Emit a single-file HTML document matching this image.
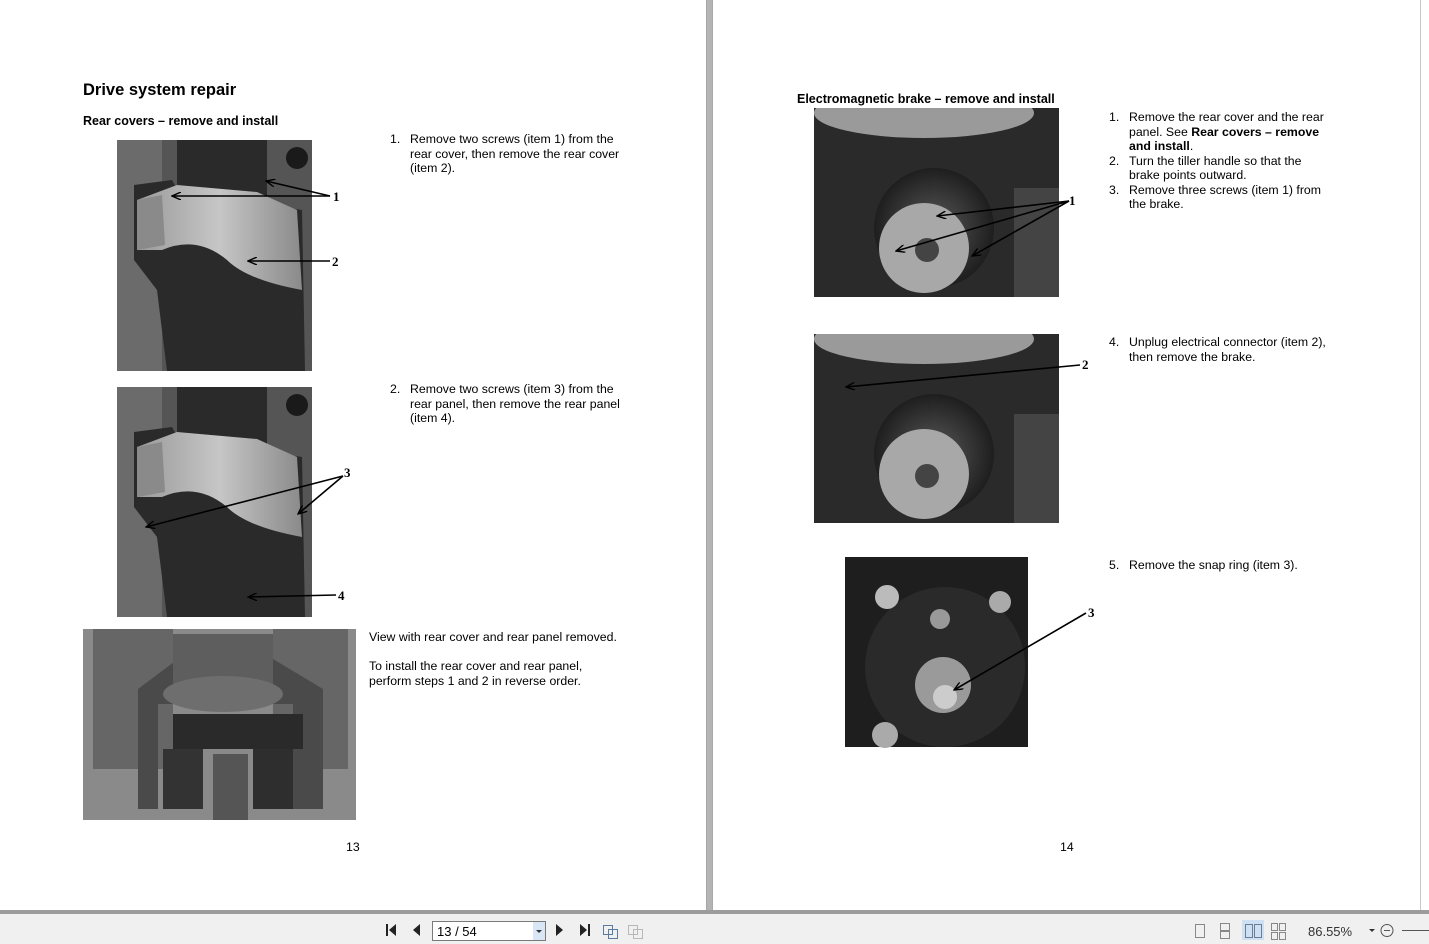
<!DOCTYPE html>
<html><head><meta charset="utf-8"><style>
*{margin:0;padding:0}
body{width:1429px;height:944px;background:#fff;position:relative;overflow:hidden;font-family:"Liberation Sans",Arial,sans-serif;color:#000}
.t{position:absolute;font-size:12.3px;line-height:14.5px;white-space:nowrap}
.n{position:absolute;font-size:12.3px}
h1{position:absolute;left:83px;top:81px;font-size:16.5px;font-weight:bold}
.h2{position:absolute;font-size:12.5px;font-weight:bold}
.ol{position:absolute;font-size:12.3px;line-height:14.5px}
.ol div{position:relative;padding-left:20px}
.ol span{position:absolute;left:0}
</style></head><body>
<div style="position:absolute;left:706px;top:0;width:7px;height:912px;background:#a8a8a8"></div>
<div style="position:absolute;left:707px;top:0;width:5px;height:912px;background:#b4b4b4"></div>
<div style="position:absolute;left:1420px;top:0;width:1px;height:912px;background:#c8c8c8"></div>
<div style="position:absolute;left:0;top:910px;width:1429px;height:4px;background:#9c9c9c"></div>
<div style="position:absolute;left:0;top:914px;width:1429px;height:30px;background:#f0f0f0"></div>

<svg style="position:absolute;left:0;top:0" width="1429" height="944">
<defs>
<linearGradient id="cv" x1="0" x2="1"><stop offset="0" stop-color="#9a9a9a"/><stop offset=".5" stop-color="#c6c6c6"/><stop offset="1" stop-color="#8a8a8a"/></linearGradient>
<radialGradient id="bk"><stop offset="0" stop-color="#5a5a5a"/><stop offset="1" stop-color="#1e1e1e"/></radialGradient>
<clipPath id="c1"><rect width="245" height="189"/></clipPath>
<marker id="a" markerWidth="10" markerHeight="8" refX="9" refY="4" orient="auto" markerUnits="userSpaceOnUse"><path d="M0,0 L9,4 L0,8" fill="none" stroke="#000" stroke-width="1.4"/></marker>
</defs>
<g transform="translate(117,140)">
<rect width="195" height="231" fill="#555"/>
<rect x="0" y="0" width="45" height="231" fill="#6b6b6b"/>
<rect x="60" y="0" width="90" height="70" fill="#2a2a2a"/>
<circle cx="180" cy="18" r="11" fill="#1a1a1a"/>
<path d="M17,45 L55,40 L65,58 L120,60 L185,70 L188,231 L50,231 L40,150 L17,120 Z" fill="#2a2a2a"/>
<path d="M20,60 L60,45 L140,52 L180,70 L185,150 Q130,140 110,120 Q80,95 45,110 L20,110 Z" fill="url(#cv)"/>
<path d="M20,60 L45,55 L48,105 L20,110 Z" fill="#8a8a8a"/>
</g>
<g transform="translate(117,387)">
<rect width="195" height="230" fill="#555"/>
<rect x="0" y="0" width="45" height="230" fill="#6b6b6b"/>
<rect x="60" y="0" width="90" height="70" fill="#2a2a2a"/>
<circle cx="180" cy="18" r="11" fill="#1a1a1a"/>
<path d="M17,45 L55,40 L65,58 L120,60 L185,70 L188,230 L50,230 L40,150 L17,120 Z" fill="#2a2a2a"/>
<path d="M20,60 L60,45 L140,52 L180,70 L185,150 Q130,140 110,120 Q80,95 45,110 L20,110 Z" fill="url(#cv)"/>
<path d="M20,60 L45,55 L48,105 L20,110 Z" fill="#8a8a8a"/>
</g>
<g transform="translate(83,629)">
<rect width="273" height="191" fill="#8a8a8a"/>
<rect x="10" y="0" width="80" height="140" fill="#666"/>
<rect x="190" y="0" width="75" height="140" fill="#666"/>
<path d="M55,60 L95,30 L190,30 L240,60 L240,180 L210,180 L210,75 L75,75 L75,180 L55,180Z" fill="#4a4a4a"/>
<rect x="90" y="5" width="100" height="60" fill="#5e5e5e"/>
<ellipse cx="140" cy="65" rx="60" ry="18" fill="#6e6e6e"/>
<rect x="90" y="85" width="130" height="35" fill="#2a2a2a"/>
<rect x="130" y="125" width="35" height="66" fill="#555"/>
<rect x="80" y="120" width="40" height="60" fill="#333"/>
<rect x="170" y="120" width="40" height="60" fill="#2e2e2e"/>
</g>
<g transform="translate(814,108)" clip-path="url(#c1)">
<rect width="245" height="189" fill="#2a2a2a"/>
<ellipse cx="110" cy="5" rx="110" ry="25" fill="#9a9a9a"/>
<circle cx="120" cy="120" r="60" fill="url(#bk)"/>
<circle cx="110" cy="140" r="45" fill="#a8a8a8"/>
<circle cx="113" cy="142" r="12" fill="#444"/>
<rect x="200" y="80" width="45" height="109" fill="#444"/>
</g>
<g transform="translate(814,334)" clip-path="url(#c1)">
<rect width="245" height="189" fill="#2a2a2a"/>
<ellipse cx="110" cy="5" rx="110" ry="25" fill="#9a9a9a"/>
<circle cx="120" cy="120" r="60" fill="url(#bk)"/>
<circle cx="110" cy="140" r="45" fill="#a8a8a8"/>
<circle cx="113" cy="142" r="12" fill="#444"/>
<rect x="200" y="80" width="45" height="109" fill="#444"/>
</g>
<g transform="translate(845,557)">
<rect width="183" height="190" fill="#1e1e1e"/>
<circle cx="100" cy="110" r="80" fill="#2a2a2a"/>
<circle cx="98" cy="128" r="28" fill="#9a9a9a"/>
<circle cx="100" cy="140" r="12" fill="#ccc"/>
<circle cx="42" cy="40" r="12" fill="#bbb"/>
<circle cx="155" cy="45" r="11" fill="#aaa"/>
<circle cx="95" cy="62" r="10" fill="#999"/>
<circle cx="40" cy="178" r="13" fill="#aaa"/>
</g>
<g stroke="#000" stroke-width="1.6" fill="none">
<path d="M330,196 L172,196" marker-end="url(#a)"/>
<path d="M330,196 L266,181" marker-end="url(#a)"/>
<path d="M330,261 L248,261" marker-end="url(#a)"/>
<path d="M343,476 L146,527" marker-end="url(#a)"/>
<path d="M343,476 L298,514" marker-end="url(#a)"/>
<path d="M336,595 L248,597" marker-end="url(#a)"/>
<path d="M1069,201 L937,216" marker-end="url(#a)"/>
<path d="M1069,201 L896,251" marker-end="url(#a)"/>
<path d="M1069,201 L972,256" marker-end="url(#a)"/>
<path d="M1080,365 L846,387" marker-end="url(#a)"/>
<path d="M1086,613 L954,690" marker-end="url(#a)"/>
</g>
<g font-family="Liberation Serif,serif" font-weight="bold" font-size="13">
<text x="333" y="201">1</text><text x="332" y="266">2</text><text x="344" y="477">3</text><text x="338" y="600">4</text>
<text x="1069" y="205">1</text><text x="1082" y="369">2</text><text x="1088" y="617">3</text>
</g>
</svg>

<h1>Drive system repair</h1>
<div class="h2" style="left:83px;top:114px">Rear covers – remove and install</div>
<div class="h2" style="left:797px;top:92px">Electromagnetic brake – remove and install</div>

<div class="ol" style="left:390px;top:132px;width:240px">
<div><span>1.</span>Remove two screws (item 1) from the rear cover, then remove the rear cover (item 2).</div></div>
<div class="ol" style="left:390px;top:382px;width:240px">
<div><span>2.</span>Remove two screws (item 3) from the rear panel, then remove the rear panel (item 4).</div></div>
<div class="t" style="left:369px;top:630px">View with rear cover and rear panel removed.<br><br>To install the rear cover and rear panel,<br>perform steps 1 and 2 in reverse order.</div>
<div class="ol" style="left:1109px;top:110px;width:220px">
<div><span>1.</span>Remove the rear cover and the rear panel. See <b>Rear covers – remove and install</b>.</div>
<div><span>2.</span>Turn the tiller handle so that the brake points outward.</div>
<div><span>3.</span>Remove three screws (item 1) from the brake.</div></div>
<div class="ol" style="left:1109px;top:335px;width:225px">
<div><span>4.</span>Unplug electrical connector (item 2), then remove the brake.</div></div>
<div class="ol" style="left:1109px;top:558px;width:225px">
<div><span>5.</span>Remove the snap ring (item 3).</div></div>
<div class="n" style="left:346px;top:840px">13</div>
<div class="n" style="left:1060px;top:840px">14</div>

<svg style="position:absolute;left:0;top:914px" width="1429" height="30">
<g fill="#222">
<rect x="386" y="10" width="2" height="12"/><path d="M396,10 L389,16 L396,22Z"/>
<path d="M420,10 L413,16 L420,22Z"/>
<path d="M556,10 L563,16 L556,22Z"/>
<path d="M580,10 L587,16 L580,22Z"/><rect x="588" y="10" width="2" height="12"/>
</g>
<rect x="432.5" y="7.5" width="113" height="19" fill="#fff" stroke="#7a7a7a"/>
<rect x="533" y="8" width="12" height="18" fill="#d8e6f5"/>
<path d="M536,16 L542,16 L539,19Z" fill="#333"/>
<text x="437" y="22" font-size="13" font-family="Liberation Sans,sans-serif" fill="#000">13 / 54</text>
<g fill="none" stroke="#5a7ca0"><rect x="603.5" y="11.5" width="9" height="9"/><rect x="608.5" y="15.5" width="9" height="9"/></g>
<g fill="none" stroke="#b8b8b8"><rect x="628.5" y="11.5" width="9" height="9"/><rect x="633.5" y="15.5" width="9" height="9"/></g>
<g fill="none" stroke="#888">
<rect x="1195.5" y="10.5" width="9" height="13"/>
<rect x="1220.5" y="9.5" width="9" height="7"/><rect x="1220.5" y="17.5" width="9" height="7"/>
</g>
<rect x="1242" y="6" width="22" height="20" fill="#cfe0f3"/>
<g fill="none" stroke="#6a7e96"><rect x="1245.5" y="10.5" width="7" height="13"/><rect x="1254.5" y="10.5" width="7" height="13"/></g>
<g fill="none" stroke="#888"><rect x="1271.5" y="9.5" width="6" height="7"/><rect x="1279.5" y="9.5" width="6" height="7"/><rect x="1271.5" y="18.5" width="6" height="7"/><rect x="1279.5" y="18.5" width="6" height="7"/></g>
<text x="1308" y="22" font-size="13" font-family="Liberation Sans,sans-serif" fill="#333">86.55%</text>
<path d="M1369,15 L1375,15 L1372,18Z" fill="#333"/>
<circle cx="1387" cy="16.5" r="6" fill="none" stroke="#555"/><line x1="1384" y1="16.5" x2="1390" y2="16.5" stroke="#555"/>
<line x1="1402" y1="16.5" x2="1429" y2="16.5" stroke="#555"/>
</svg>
</body></html>
